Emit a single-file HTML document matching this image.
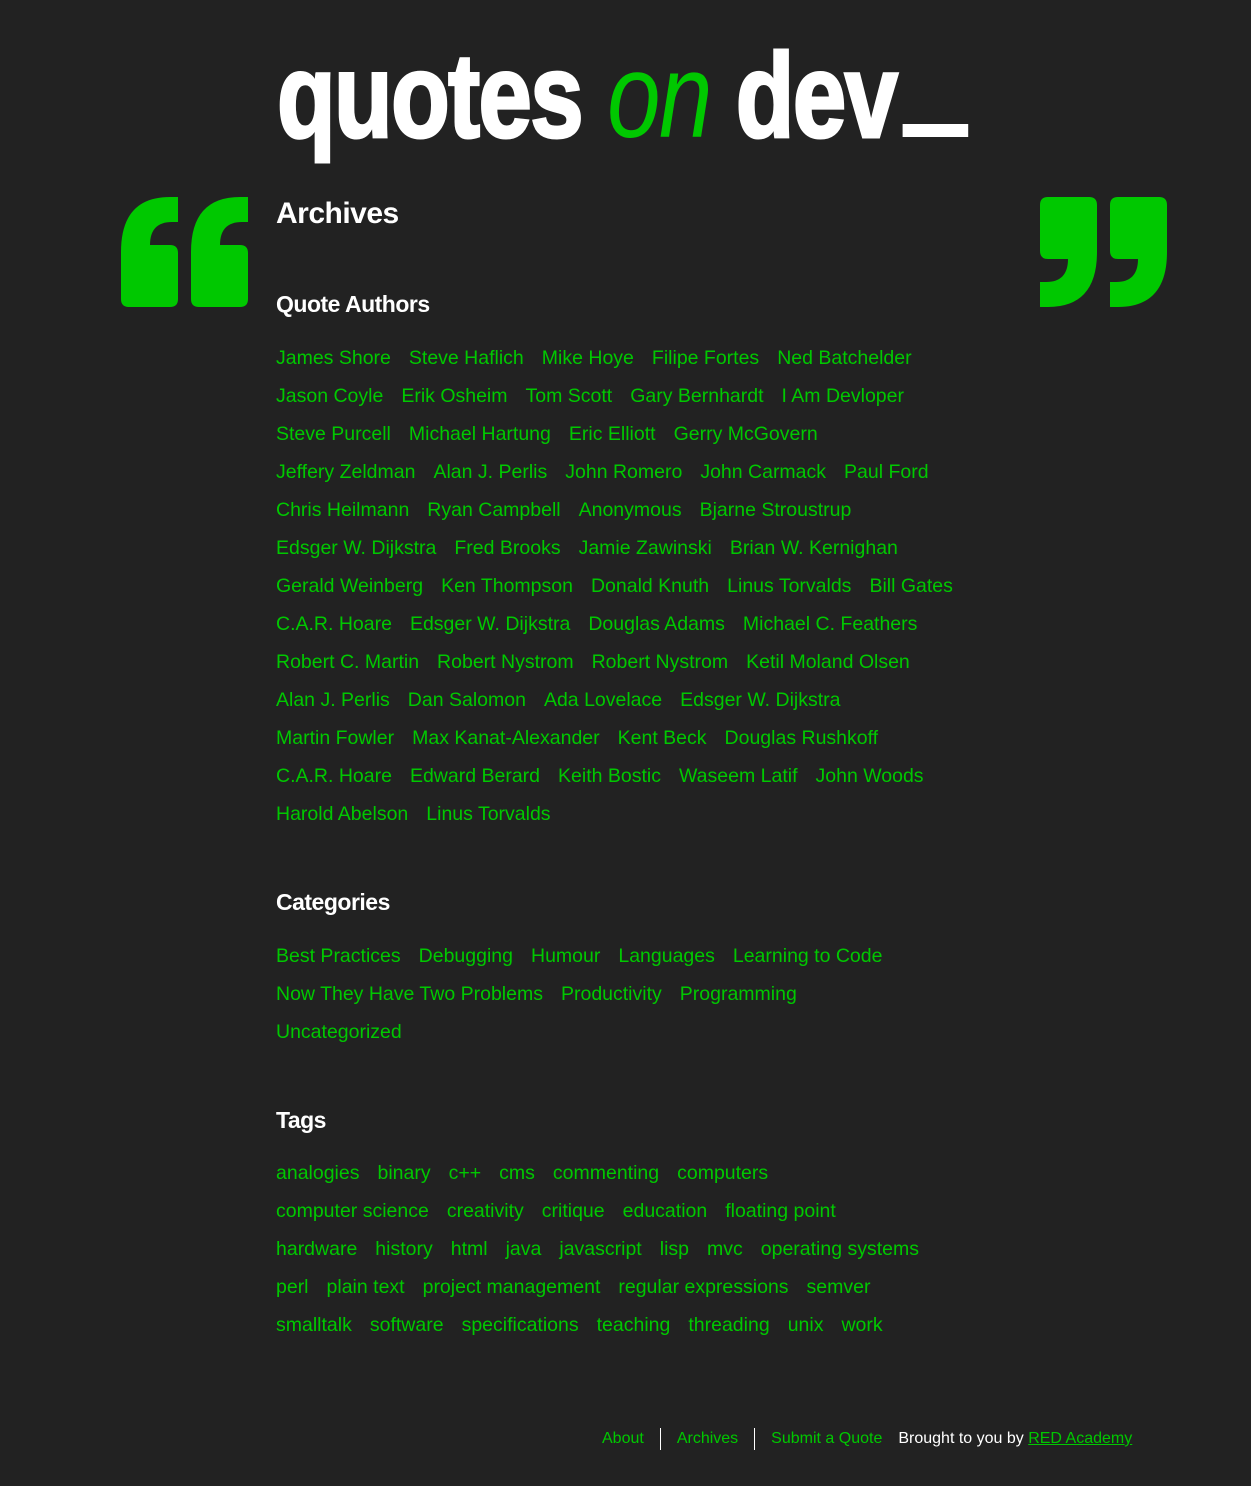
<!DOCTYPE html>
<html><head><meta charset="utf-8"><style>
body{margin:0;background:#222;width:1251px;height:1486px;position:relative;font-family:"Liberation Sans",sans-serif;overflow:hidden}
.title{position:absolute;left:277px;top:26px;font-size:120px;font-weight:bold;color:#fff;white-space:nowrap;transform:scaleX(0.8);transform-origin:0 0;line-height:140px;letter-spacing:-2px;-webkit-text-stroke:3px #fff}
.title i{color:#00c800;font-weight:normal;-webkit-text-stroke:0}
.us{display:inline-block;width:82px;height:13px;background:#fff;margin-left:8px;vertical-align:baseline}
h1,h2{position:absolute;left:276px;margin:0;color:#fff;font-weight:bold;letter-spacing:-0.5px}
h1{font-size:30px;top:197px}
h2{font-size:23px}
.list{position:absolute;left:276px;width:700px;color:#00c800;font-size:19.5px;line-height:38px}
.list div{white-space:nowrap}
.list span{margin-right:18px}
.foot{position:absolute;top:1428px;left:602px;font-size:16px;line-height:22px;color:#00c800;white-space:nowrap;display:flex;align-items:center}
.foot .sep{width:1px;height:22px;background:#fff;margin:0 16px}
</style></head><body>
<div class="title">quotes <i>on</i> dev<span class="us"></span></div>
<svg style="position:absolute;left:0;top:0" width="1251" height="400">
<g fill="#00c800">
<path id="q" d="M121 299 L121 252 Q121 197 170 197 L178 197 Q178 222 178 222 L172 222 Q150 222 150 245 L170 245 Q178 245 178 253 L178 299 Q178 307 170 307 L129 307 Q121 307 121 299 Z"/>
<use href="#q" x="70"/>
<g transform="rotate(180 1103.5 252)"><use href="#q" x="919"/><use href="#q" x="989"/></g>
</g></svg>
<h1>Archives</h1>
<h2 style="top:291px">Quote Authors</h2>
<div class="list" style="top:339px">
<div><span>James Shore</span><span>Steve Haflich</span><span>Mike Hoye</span><span>Filipe Fortes</span><span>Ned Batchelder</span></div>
<div><span>Jason Coyle</span><span>Erik Osheim</span><span>Tom Scott</span><span>Gary Bernhardt</span><span>I Am Devloper</span></div>
<div><span>Steve Purcell</span><span>Michael Hartung</span><span>Eric Elliott</span><span>Gerry McGovern</span></div>
<div><span>Jeffery Zeldman</span><span>Alan J. Perlis</span><span>John Romero</span><span>John Carmack</span><span>Paul Ford</span></div>
<div><span>Chris Heilmann</span><span>Ryan Campbell</span><span>Anonymous</span><span>Bjarne Stroustrup</span></div>
<div><span>Edsger W. Dijkstra</span><span>Fred Brooks</span><span>Jamie Zawinski</span><span>Brian W. Kernighan</span></div>
<div><span>Gerald Weinberg</span><span>Ken Thompson</span><span>Donald Knuth</span><span>Linus Torvalds</span><span>Bill Gates</span></div>
<div><span>C.A.R. Hoare</span><span>Edsger W. Dijkstra</span><span>Douglas Adams</span><span>Michael C. Feathers</span></div>
<div><span>Robert C. Martin</span><span>Robert Nystrom</span><span>Robert Nystrom</span><span>Ketil Moland Olsen</span></div>
<div><span>Alan J. Perlis</span><span>Dan Salomon</span><span>Ada Lovelace</span><span>Edsger W. Dijkstra</span></div>
<div><span>Martin Fowler</span><span>Max Kanat-Alexander</span><span>Kent Beck</span><span>Douglas Rushkoff</span></div>
<div><span>C.A.R. Hoare</span><span>Edward Berard</span><span>Keith Bostic</span><span>Waseem Latif</span><span>John Woods</span></div>
<div><span>Harold Abelson</span><span>Linus Torvalds</span></div>
</div>
<h2 style="top:889px">Categories</h2>
<div class="list" style="top:937px">
<div><span>Best Practices</span><span>Debugging</span><span>Humour</span><span>Languages</span><span>Learning to Code</span></div>
<div><span>Now They Have Two Problems</span><span>Productivity</span><span>Programming</span></div>
<div><span>Uncategorized</span></div>
</div>
<h2 style="top:1107px">Tags</h2>
<div class="list" style="top:1154px">
<div><span>analogies</span><span>binary</span><span>c++</span><span>cms</span><span>commenting</span><span>computers</span></div>
<div><span>computer science</span><span>creativity</span><span>critique</span><span>education</span><span>floating point</span></div>
<div><span>hardware</span><span>history</span><span>html</span><span>java</span><span>javascript</span><span>lisp</span><span>mvc</span><span>operating systems</span></div>
<div><span>perl</span><span>plain text</span><span>project management</span><span>regular expressions</span><span>semver</span></div>
<div><span>smalltalk</span><span>software</span><span>specifications</span><span>teaching</span><span>threading</span><span>unix</span><span>work</span></div>
</div>
<div class="foot"><span>About</span><span class="sep"></span><span>Archives</span><span class="sep"></span><span>Submit a Quote</span><span style="color:#fff;margin-left:16px">Brought to you by <u style="color:#00c800">RED Academy</u></span></div>
</body></html>
